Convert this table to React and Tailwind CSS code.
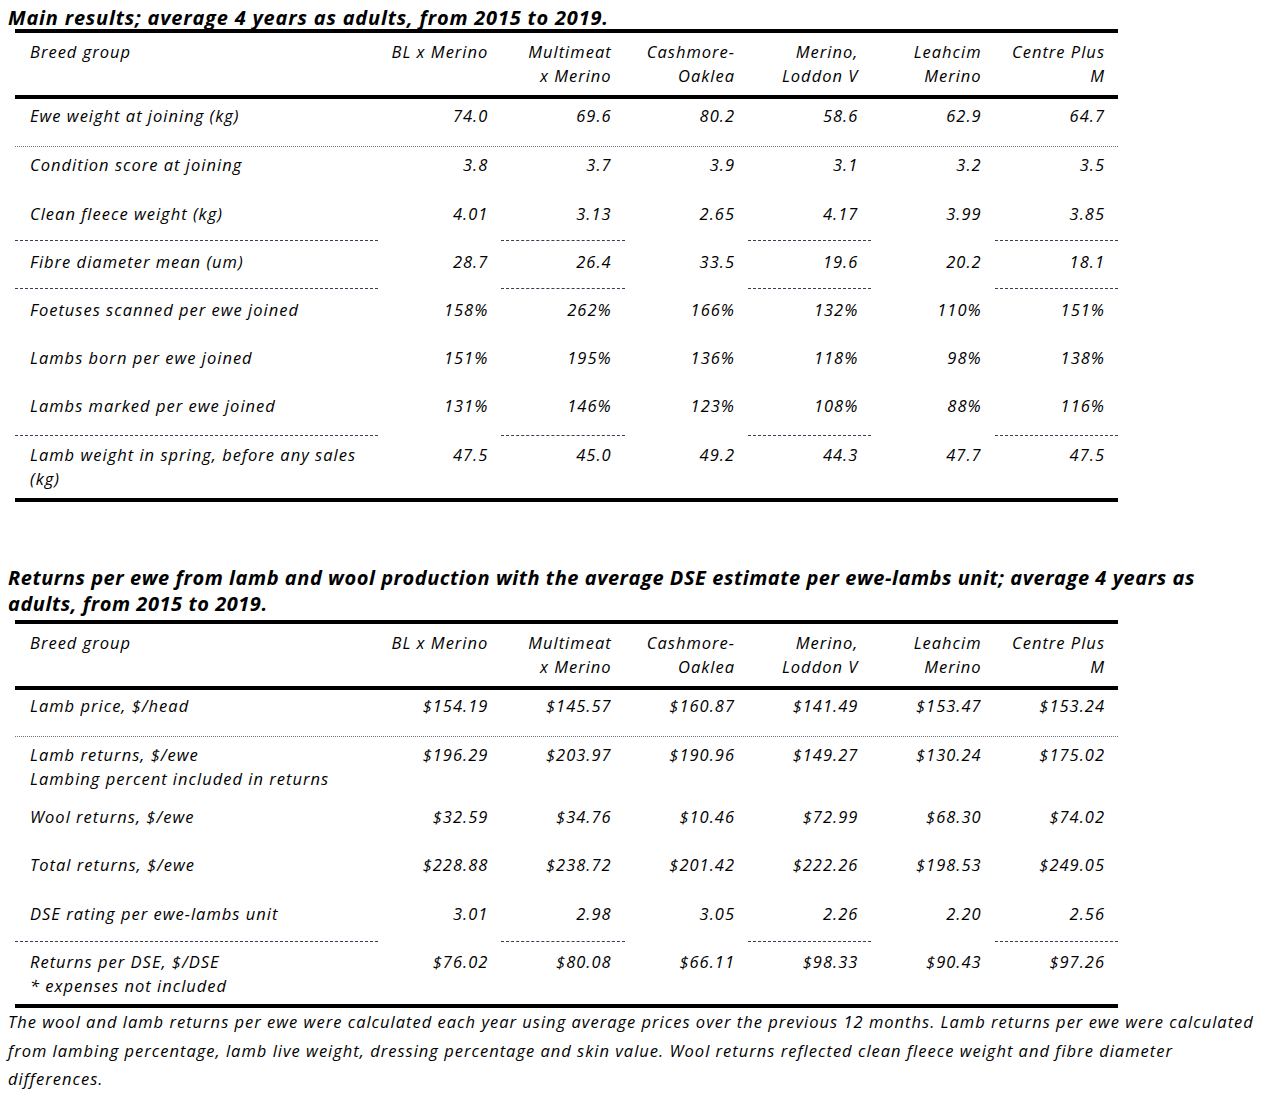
import React from "react";

const cols = [
  ["BL x Merino"],
  ["Multimeat", "x Merino"],
  ["Cashmore-", "Oaklea"],
  ["Merino,", "Loddon V"],
  ["Leahcim", "Merino"],
  ["Centre Plus", "M"],
];

// rows: label lines, values, row height, top padding, line after
const mainRows = [
  { label: ["Ewe weight at joining (kg)"], values: ["74.0", "69.6", "80.2", "58.6", "62.9", "64.7"], h: "h-[47px]", pt: "pt-[5px]", after: "dotted" },
  { label: ["Condition score at joining"], values: ["3.8", "3.7", "3.9", "3.1", "3.2", "3.5"], h: "h-[49px]", pt: "pt-[6px]" },
  { label: ["Clean fleece weight (kg)"], values: ["4.01", "3.13", "2.65", "4.17", "3.99", "3.85"], h: "h-[44px]", pt: "pt-[6px]", after: "dashed" },
  { label: ["Fibre diameter mean (um)"], values: ["28.7", "26.4", "33.5", "19.6", "20.2", "18.1"], h: "h-[47px]", pt: "pt-[9px]", after: "dashed" },
  { label: ["Foetuses scanned per ewe joined"], values: ["158%", "262%", "166%", "132%", "110%", "151%"], h: "h-[48px]", pt: "pt-[9px]" },
  { label: ["Lambs born per ewe joined"], values: ["151%", "195%", "136%", "118%", "98%", "138%"], h: "h-[48px]", pt: "pt-[9px]" },
  { label: ["Lambs marked per ewe joined"], values: ["131%", "146%", "123%", "108%", "88%", "116%"], h: "h-[50px]", pt: "pt-[9px]", after: "dashed" },
  { label: ["Lamb weight in spring, before any sales", "(kg)"], values: ["47.5", "45.0", "49.2", "44.3", "47.7", "47.5"], h: "h-[62px]", pt: "pt-[7px]" },
];

const returnRows = [
  { label: ["Lamb price, $/head"], values: ["$154.19", "$145.57", "$160.87", "$141.49", "$153.47", "$153.24"], h: "h-[46px]", pt: "pt-[4px]", after: "dotted" },
  { label: ["Lamb returns, $/ewe", "Lambing percent included in returns"], values: ["$196.29", "$203.97", "$190.96", "$149.27", "$130.24", "$175.02"], h: "h-[62px]", pt: "pt-[6px]" },
  { label: ["Wool returns, $/ewe"], values: ["$32.59", "$34.76", "$10.46", "$72.99", "$68.30", "$74.02"], h: "h-[48px]", pt: "pt-[6px]" },
  { label: ["Total returns, $/ewe"], values: ["$228.88", "$238.72", "$201.42", "$222.26", "$198.53", "$249.05"], h: "h-[49px]", pt: "pt-[6px]" },
  { label: ["DSE rating per ewe-lambs unit"], values: ["3.01", "2.98", "3.05", "2.26", "2.20", "2.56"], h: "h-[45px]", pt: "pt-[6px]", after: "dashed" },
  { label: ["Returns per DSE, $/DSE", "* expenses not included"], values: ["$76.02", "$80.08", "$66.11", "$98.33", "$90.43", "$97.26"], h: "h-[62px]", pt: "pt-[8px]" },
];

const grid = "grid grid-cols-[363px_repeat(6,minmax(0,1fr))]";

function Separator({ kind }) {
  if (kind === "dotted") {
    return <div className="border-t border-dotted border-gray-500" />;
  }
  // dashed segments under label column and every second value column
  return (
    <div className={grid}>
      <div className="border-t border-dashed border-gray-700" />
      <div />
      <div className="border-t border-dashed border-gray-700" />
      <div />
      <div className="border-t border-dashed border-gray-700" />
      <div />
      <div className="border-t border-dashed border-gray-700" />
    </div>
  );
}

function DataTable({ rows }) {
  return (
    <div className="w-[1103px] ml-[7px]">
      <div className="h-[4px] bg-black" />
      <div className={`${grid} h-[62px] pt-[7px] leading-[24px]`}>
        <div className="pl-[15px]">Breed group</div>
        {cols.map((c, i) => (
          <div key={i} className="text-right pr-[13px]">
            {c.map((line) => (
              <div key={line}>{line}</div>
            ))}
          </div>
        ))}
      </div>
      <div className="h-[4px] bg-black" />
      {rows.map((r, i) => (
        <React.Fragment key={i}>
          <div className={`${grid} ${r.h} ${r.pt} leading-[24px]`}>
            <div className="pl-[15px] whitespace-nowrap">
              {r.label.map((line) => (
                <div key={line}>{line}</div>
              ))}
            </div>
            {r.values.map((v, j) => (
              <div key={j} className="text-right pr-[13px]">
                {v}
              </div>
            ))}
          </div>
          {r.after && <Separator kind={r.after} />}
        </React.Fragment>
      ))}
      <div className="h-[4px] bg-black" />
    </div>
  );
}

export default function App() {
  return (
    <div className="w-[1264px] min-h-[1096px] bg-white text-black italic text-[16.5px] tracking-[1px] font-['Open_Sans','Lato',sans-serif]">
      <div className="pl-[8px]">
        <h1 className="h-[29px] pt-[6px] leading-[24px] text-[20px] tracking-[0.8px] font-bold whitespace-nowrap">
          Main results; average 4 years as adults, from 2015 to 2019.
        </h1>
        <DataTable rows={mainRows} />

        <h2 className="mt-[63px] h-[55px] leading-[26px] text-[20px] tracking-[0.55px] font-bold whitespace-nowrap">
          Returns per ewe from lamb and wool production with the average DSE estimate per ewe-lambs unit; average 4 years as
          <br />
          adults, from 2015 to 2019.
        </h2>
        <DataTable rows={returnRows} />

        <p className="leading-[28.5px] whitespace-nowrap">
          The wool and lamb returns per ewe were calculated each year using average prices over the previous 12 months. Lamb returns per ewe were calculated
          <br />
          from lambing percentage, lamb live weight, dressing percentage and skin value. Wool returns reflected clean fleece weight and fibre diameter
          <br />
          differences.
        </p>
      </div>
    </div>
  );
}
